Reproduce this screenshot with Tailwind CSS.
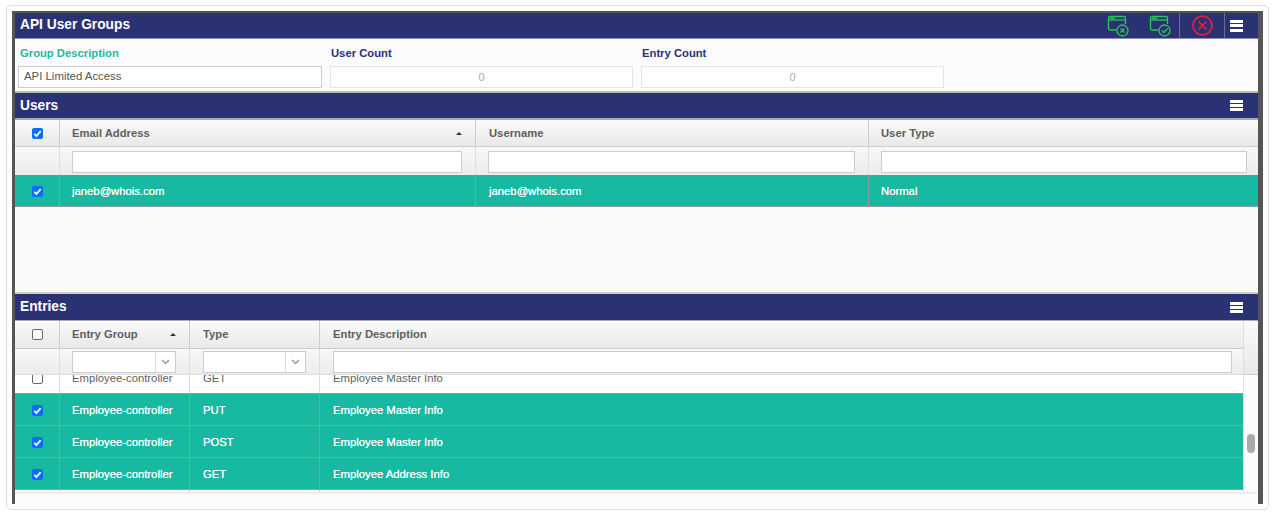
<!DOCTYPE html>
<html lang="en">
<head>
    <meta charset="UTF-8">
    <title>API User Groups</title>
    <script src="https://cdn.jsdelivr.net/npm/@tailwindcss/browser@4"></script>
</head>
<body class="bg-white font-['Liberation_Sans',Arial,sans-serif] text-[11.250px] text-[#5f5f5f] overflow-hidden">
<div class="w-[1276px] h-[516px] pt-[5px] pl-[6px]">
  <div class="w-[1263px] h-[505px] border border-[#ddd] rounded-[5px] pt-[5px] pl-[5px] bg-white">
    <div class="w-[1251px] h-[493px] border-l-[3px] border-r-[5px] border-t-[2px] border-[#555] bg-[#fcfcfe] overflow-hidden flex flex-col">

      <!-- title bar -->
      <div class="h-[26px] shrink-0 bg-[#2b3273] flex items-center pl-[5px] border-b border-[#8a8fae]">
        <span class="text-white font-bold text-[13.750px] flex-1">API User Groups</span>
        <svg class="w-[22px] h-[22px] mr-[20px]" viewBox="0 0 22 22" fill="none" stroke="#2fc45a" stroke-width="1.300">
          <path d="M9 15H3a1.500 1.500 0 0 1-1.500-1.500V3A1.500 1.500 0 0 1 3 1.500h14A1.500 1.500 0 0 1 18.500 3v6"/><path d="M1.500 5h17"/><path d="M3 3.200h5" stroke-width="1.500"/>
          <circle cx="15.500" cy="15.500" r="5.500"/><path d="M13.500 13.500l4 4M17.500 13.500l-4 4"/>
        </svg>
        <svg class="w-[22px] h-[22px] mr-[8px]" viewBox="0 0 22 22" fill="none" stroke="#2fc45a" stroke-width="1.300">
          <path d="M9 15H3a1.500 1.500 0 0 1-1.500-1.500V3A1.500 1.500 0 0 1 3 1.500h14A1.500 1.500 0 0 1 18.500 3v6"/><path d="M1.500 5h17"/><path d="M3 3.200h5" stroke-width="1.500"/>
          <circle cx="15.500" cy="15.500" r="5.500"/><path d="M13 15.500l2 2 3.500-4"/>
        </svg>
        <div class="w-[46px] h-[25px] border-l border-r border-[#6a6f96] flex items-center justify-center">
          <svg class="w-[21px] h-[21px]" viewBox="0 0 21 21" fill="none" stroke="#e5203a" stroke-width="1.700">
            <circle cx="10.500" cy="10.500" r="9.500"/><path d="M6.500 6.500l8 8M14.500 6.500l-8 8"/>
          </svg>
        </div>
        <div class="w-[33px] pl-[5px]"><div class="w-[13px] h-[12px] flex flex-col justify-between"><i class="block h-[3px] bg-white"></i><i class="block h-[3px] bg-white"></i><i class="block h-[3px] bg-white"></i></div></div>
      </div>

      <!-- group form -->
      <div class="h-[54px] shrink-0 flex gap-[8px] pl-[3px] pt-[8px] border-b-2 border-[#bbb]">
        <div class="w-[304px]">
          <div class="font-bold text-[#22b8a0] leading-[12px] h-[19px] pl-[2px]">Group Description</div>
          <div class="h-[22px] border border-[#ccc] bg-white px-[5px] leading-[19px] text-[#555] text-[11.400px]">API Limited Access</div>
        </div>
        <div class="w-[303px]">
          <div class="font-bold text-[#2b3273] leading-[12px] h-[19px] pl-[1px]">User Count</div>
          <div class="h-[22px] border border-[#e5e5e5] bg-white text-center leading-[20px] text-[#aaa] text-[11px]">0</div>
        </div>
        <div class="w-[303px]">
          <div class="font-bold text-[#2b3273] leading-[12px] h-[19px] pl-[1px]">Entry Count</div>
          <div class="h-[22px] border border-[#e5e5e5] bg-white text-center leading-[20px] text-[#aaa] text-[11px]">0</div>
        </div>
      </div>

      <!-- users -->
      <div class="h-[27px] shrink-0 bg-[#2b3273] flex items-center justify-between pl-[5px] border-b-2 border-[#aaa]">
        <span class="text-white font-bold text-[13.750px] pt-[1px]">Users</span>
        <div class="w-[13px] h-[11px] mr-[15px] flex flex-col justify-between"><i class="block h-[3px] bg-white"></i><i class="block h-[3px] bg-white"></i><i class="block h-[3px] bg-white"></i></div>
      </div>
      <div class="h-[174px] shrink-0 bg-[#fafafa] border-b-2 border-[#ccc]">
        <div class="grid grid-cols-[45px_416px_393px_1fr] h-[27px] bg-gradient-to-b from-[#fafafa] to-[#e9e9e9] border-b border-[#ccc] font-bold">
          <div class="border-r border-[#ccc] flex items-center justify-center">
            <span class="w-[11px] h-[11px] rounded-[2px] bg-[#0d6efd] flex items-center justify-center"><svg class="w-[9px] h-[9px]" viewBox="0 0 10 10" fill="none" stroke="#fff" stroke-width="2"><path d="M1.500 5.500l2.300 2.300 4.700-5.500"/></svg></span>
          </div>
          <div class="border-r border-[#ccc] pl-[12px] pr-[13px] flex items-center justify-between"><span>Email Address</span><i class="w-0 h-0 border-x-[3px] border-x-transparent border-b-[3px] border-b-[#333]"></i></div>
          <div class="border-r border-[#ccc] pl-[13px] flex items-center">Username</div>
          <div class="pl-[12px] flex items-center">User Type</div>
        </div>
        <div class="grid grid-cols-[45px_416px_393px_1fr] h-[28px] bg-gradient-to-b from-[#f8f8f8] to-[#ececec]">
          <div class="border-r border-[#ddd]"></div>
          <div class="border-r border-[#ddd] pl-[12px] pr-[13px] pt-[4px]"><div class="h-[22px] border border-[#ccc] bg-white"></div></div>
          <div class="border-r border-[#ddd] pl-[12px] pr-[13px] pt-[4px]"><div class="h-[22px] border border-[#ccc] bg-white"></div></div>
          <div class="pl-[12px] pr-[11px] pt-[4px]"><div class="h-[22px] border border-[#ccc] bg-white"></div></div>
        </div>
        <div class="grid grid-cols-[45px_416px_393px_1fr] h-[32px] bg-[#17b9a0] border-b border-[#999] text-white text-[11.300px] [text-shadow:0_0_0.6px_#fff]">
          <div class="border-r border-[#8a9f9c] flex items-center justify-center pt-[2px]">
            <span class="w-[11px] h-[11px] rounded-[2px] bg-[#0d6efd] flex items-center justify-center"><svg class="w-[9px] h-[9px]" viewBox="0 0 10 10" fill="none" stroke="#fff" stroke-width="2"><path d="M1.500 5.500l2.300 2.300 4.700-5.500"/></svg></span>
          </div>
          <div class="border-r border-[#8a9f9c] pl-[12px] pt-[2px] flex items-center">janeb@whois.com</div>
          <div class="border-r border-[#8a9f9c] pl-[13px] pt-[2px] flex items-center">janeb@whois.com</div>
          <div class="pl-[12px] pt-[2px] flex items-center">Normal</div>
        </div>
      </div>

      <!-- entries -->
      <div class="h-[27px] shrink-0 bg-[#2b3273] flex items-center justify-between pl-[5px] border-b border-[#aaa]">
        <span class="text-white font-bold text-[13.750px]">Entries</span>
        <div class="w-[13px] h-[11px] mr-[15px] flex flex-col justify-between"><i class="block h-[3px] bg-white"></i><i class="block h-[3px] bg-white"></i><i class="block h-[3px] bg-white"></i></div>
      </div>
      <div class="flex-1 flex min-h-0 mb-[10px] border-b-2 border-[#eee] bg-[#fcfcfe]">
        <div class="w-[1229px] border-r border-[#ddd] flex flex-col min-h-0">
          <div class="grid grid-cols-[45px_130px_130px_1fr] h-[28px] shrink-0 bg-gradient-to-b from-[#fafafa] to-[#e9e9e9] border-b border-[#ccc] font-bold">
            <div class="border-r border-[#ccc] flex items-center justify-center"><span class="w-[11px] h-[11px] rounded-[2px] bg-white border border-[#666]"></span></div>
            <div class="border-r border-[#ccc] pl-[12px] pr-[13px] flex items-center justify-between"><span>Entry Group</span><i class="w-0 h-0 border-x-[3px] border-x-transparent border-b-[3px] border-b-[#333]"></i></div>
            <div class="border-r border-[#ccc] pl-[13px] flex items-center">Type</div>
            <div class="pl-[13px] flex items-center">Entry Description</div>
          </div>
          <div class="grid grid-cols-[45px_130px_130px_1fr] h-[26px] shrink-0 bg-gradient-to-b from-[#f8f8f8] to-[#ececec] border-b border-[#ddd]">
            <div class="border-r border-[#ddd]"></div>
            <div class="border-r border-[#ddd] pl-[12px] pr-[13px] pt-[2px]">
              <div class="h-[22px] border border-[#ccc] bg-white flex justify-end"><span class="w-[20px] border-l border-[#ddd] flex items-center justify-center"><svg class="w-[9px] h-[6px]" viewBox="0 0 9 6" fill="none" stroke="#999" stroke-width="1.500"><path d="M1 1l3.500 3.500L8 1"/></svg></span></div>
            </div>
            <div class="border-r border-[#ddd] pl-[13px] pr-[13px] pt-[2px]">
              <div class="h-[22px] border border-[#ccc] bg-white flex justify-end"><span class="w-[20px] border-l border-[#ddd] flex items-center justify-center"><svg class="w-[9px] h-[6px]" viewBox="0 0 9 6" fill="none" stroke="#999" stroke-width="1.500"><path d="M1 1l3.500 3.500L8 1"/></svg></span></div>
            </div>
            <div class="pl-[13px] pr-[11px] pt-[2px]"><div class="h-[22px] border border-[#ccc] bg-white"></div></div>
          </div>
          <div class="flex-1 min-h-0 overflow-hidden">
            <div class="mt-[-13px] text-[11.300px]">
              <div class="grid grid-cols-[45px_130px_130px_1fr] h-[32px] bg-white border-b border-[#999]">
                <div class="border-r border-[#ddd] pt-[2px] flex items-center justify-center"><span class="w-[11px] h-[11px] rounded-[2px] bg-white border border-[#666]"></span></div>
                <div class="border-r border-[#ddd] pl-[12px] pt-[2px] flex items-center">Employee-controller</div>
                <div class="border-r border-[#ddd] pl-[13px] pt-[2px] flex items-center">GET</div>
                <div class="pl-[13px] pt-[2px] flex items-center">Employee Master Info</div>
              </div>
              <div class="grid grid-cols-[45px_130px_130px_1fr] h-[32px] bg-[#17b9a0] border-b border-[#8a9f9c] text-white [text-shadow:0_0_0.6px_#fff]">
                <div class="border-r border-[#8a9f9c] pt-[2px] flex items-center justify-center"><span class="w-[11px] h-[11px] rounded-[2px] bg-[#0d6efd] flex items-center justify-center"><svg class="w-[9px] h-[9px]" viewBox="0 0 10 10" fill="none" stroke="#fff" stroke-width="2"><path d="M1.500 5.500l2.300 2.300 4.700-5.500"/></svg></span></div>
                <div class="border-r border-[#8a9f9c] pl-[12px] pt-[2px] flex items-center">Employee-controller</div>
                <div class="border-r border-[#8a9f9c] pl-[13px] pt-[2px] flex items-center">PUT</div>
                <div class="pl-[13px] pt-[2px] flex items-center">Employee Master Info</div>
              </div>
              <div class="grid grid-cols-[45px_130px_130px_1fr] h-[32px] bg-[#17b9a0] border-b border-[#8a9f9c] text-white [text-shadow:0_0_0.6px_#fff]">
                <div class="border-r border-[#8a9f9c] pt-[2px] flex items-center justify-center"><span class="w-[11px] h-[11px] rounded-[2px] bg-[#0d6efd] flex items-center justify-center"><svg class="w-[9px] h-[9px]" viewBox="0 0 10 10" fill="none" stroke="#fff" stroke-width="2"><path d="M1.500 5.500l2.300 2.300 4.700-5.500"/></svg></span></div>
                <div class="border-r border-[#8a9f9c] pl-[12px] pt-[2px] flex items-center">Employee-controller</div>
                <div class="border-r border-[#8a9f9c] pl-[13px] pt-[2px] flex items-center">POST</div>
                <div class="pl-[13px] pt-[2px] flex items-center">Employee Master Info</div>
              </div>
              <div class="grid grid-cols-[45px_130px_130px_1fr] h-[32px] bg-[#17b9a0] border-b border-[#8a9f9c] text-white [text-shadow:0_0_0.6px_#fff]">
                <div class="border-r border-[#8a9f9c] pt-[2px] flex items-center justify-center"><span class="w-[11px] h-[11px] rounded-[2px] bg-[#0d6efd] flex items-center justify-center"><svg class="w-[9px] h-[9px]" viewBox="0 0 10 10" fill="none" stroke="#fff" stroke-width="2"><path d="M1.500 5.500l2.300 2.300 4.700-5.500"/></svg></span></div>
                <div class="border-r border-[#8a9f9c] pl-[12px] pt-[2px] flex items-center">Employee-controller</div>
                <div class="border-r border-[#8a9f9c] pl-[13px] pt-[2px] flex items-center">GET</div>
                <div class="pl-[13px] pt-[2px] flex items-center">Employee Address Info</div>
              </div>
              <div class="grid grid-cols-[45px_130px_130px_1fr] h-[5px] bg-white">
                <div class="border-r border-[#ccc]"></div><div class="border-r border-[#ccc]"></div><div class="border-r border-[#ccc]"></div><div></div>
              </div>
            </div>
          </div>
        </div>
        <div class="flex-1 flex flex-col">
          <div class="h-[54px] shrink-0 bg-gradient-to-b from-[#fafafa] to-[#e9e9e9] border-b border-[#ccc]"></div>
          <div class="pt-[59px] pl-[3px]"><div class="w-[8px] h-[19px] rounded-[4px] bg-[#aaa]"></div></div>
        </div>
      </div>
    </div>
  </div>
</div>
</body>
</html>
